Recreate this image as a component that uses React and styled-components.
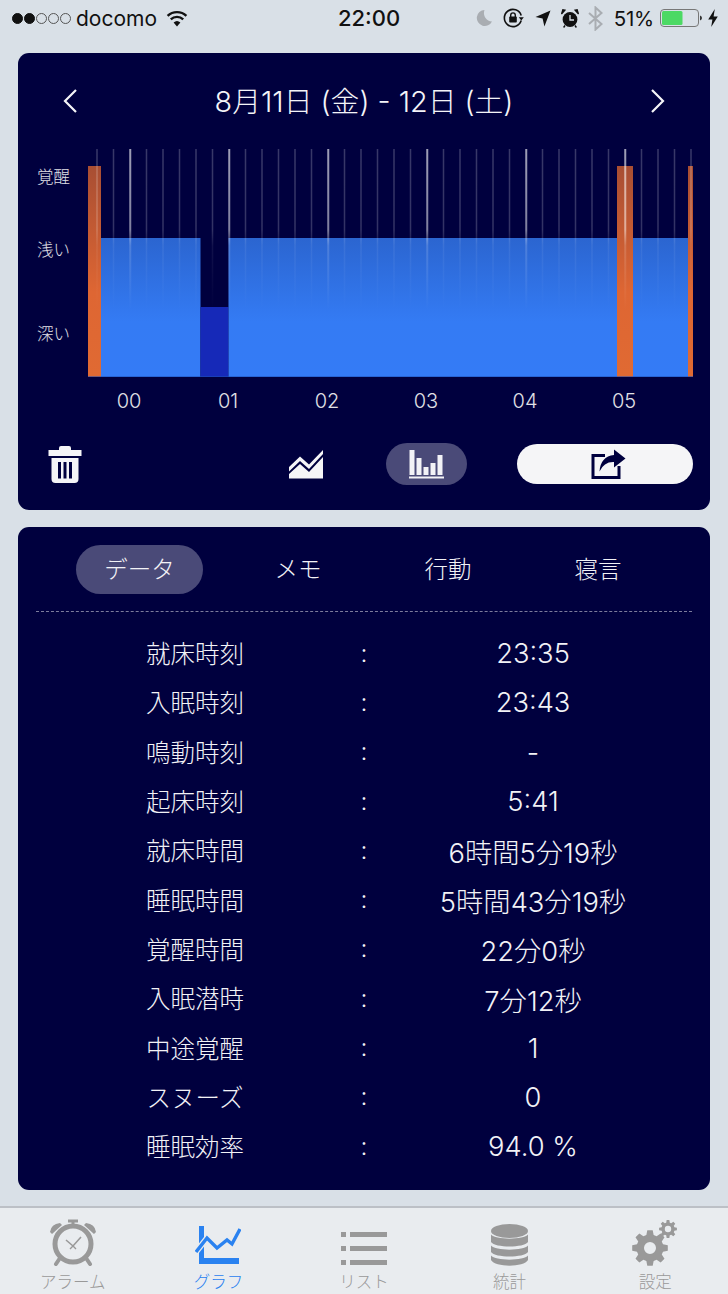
import React from "react";
import styled, { createGlobalStyle } from "styled-components";

const FONT = `Inter, "Noto Sans CJK JP", "Noto Sans", sans-serif`;

const Global = createGlobalStyle`
  html, body { margin: 0; padding: 0; width: 728px; height: 1294px; overflow: hidden; background: #d9e0e7; }
  body { font-family: ${FONT}; }
  * { box-sizing: border-box; }
`;

const Page = styled.div`
  width: 728px; height: 1294px; display: flex; flex-direction: column; background: #d9e0e7;
`;
const StatusBar = styled.div`
  height: 38px; flex: none; display: grid; grid-template-columns: 1fr auto 1fr; align-items: center;
  color: #111; font-size: 21px; padding: 0 10px 2px 12px;
`;
const StatusLeft = styled.div`display: flex; align-items: center;`;
const Carrier = styled.span`margin-left: 4px; letter-spacing: 0; font-weight: 400;`;
const Clock = styled.span`font-weight: 500; font-size: 22px; margin-left: 8px;`;
const StatusRight = styled.div`display: flex; align-items: center; justify-content: flex-end;`;
const Percent = styled.span`font-size: 20.5px; margin: 0 6px 0 11px; letter-spacing: -0.2px;`;
const Dot = styled.span`
  width: 11px; height: 11px; border-radius: 50%; margin-right: 1px; flex: none;
  background: ${p => (p.$on ? "#111" : "transparent")};
  border: 1px solid ${p => (p.$on ? "#111" : "#555")};
`;
const Ic = styled.svg`display: block; flex: none; margin-left: ${p => p.$ml || 0}px;`;

const Card = styled.section`
  margin: 15px 18px 0; background: #00003e; border-radius: 11px; color: #f2f2f6; flex: none;
`;
const GraphCard = styled(Card)`height: 457px; display: flex; flex-direction: column;`;
const DataCard = styled(Card)`margin-top: 17px; height: 663px; padding: 18px 18px 0;`;

const Header = styled.div`
  height: 87px; flex: none; display: grid; grid-template-columns: 1fr auto 1fr; align-items: center; padding: 9px 44px 0 44px;
`;
const Title = styled.h1`margin: -3px 0 0; font-size: 28.8px; font-weight: 300; color: #f4f4f8; white-space: nowrap;`;
const NavRight = styled.div`display: flex; justify-content: flex-end;`;
const ChartSvg = styled.svg`display: block; flex: none;`;
const AxisText = styled.text`font-family: ${FONT}; fill: #e0e0e6; font-size: ${p => p.$size}px; font-weight: 300;`;

const Toolbar = styled.div`
  display: grid; grid-template-columns: 241px 97px 131px 176px; align-items: center; padding: 0 0 0 30px; height: 86px;
`;
const ViewPill = styled.div`
  width: 81px; height: 42px; border-radius: 21px; background: #4a4a78; display: flex; align-items: center; justify-content: center;
`;
const SharePill = styled.div`
  width: 176px; height: 40px; border-radius: 20px; background: #f5f5f7; display: flex; align-items: center; justify-content: center; padding-left: 6px;
`;

const Tabs = styled.div`display: flex; padding-left: 40px; gap: 0; align-items: center;`;
const Tab = styled.div`
  height: 49px; flex: none; width: ${p => (p.$active ? "127px" : "150px")}; margin-right: ${p => (p.$active ? "20px" : "0")};
  border-radius: 25px; background: ${p => (p.$active ? "#4a4a78" : "transparent")};
  display: flex; align-items: center; justify-content: center; font-size: 23.5px; font-weight: 300; padding-bottom: 3px;
`;
const Divider = styled.div`margin-top: 17px; border-top: 1px dashed #7c7c9c;`;
const Rows = styled.div`padding-top: 17px;`;
const Row = styled.div`
  display: grid; grid-template-columns: 318px 20px 318px; height: 49.3px; align-items: center; text-align: center;
  font-size: 24.5px; font-weight: 300; white-space: nowrap;
`;
const Value = styled.span`font-size: 27.3px; letter-spacing: 0;`;
const LabelCell = styled.span`padding-bottom: 2px;`;

const TabBar = styled.nav`
  margin-top: 16px; flex: 1; background: #e9ecef; border-top: 2px solid #bcc0c6;
  display: grid; grid-template-columns: repeat(5, 1fr);
`;
const TabItem = styled.div`
  display: flex; flex-direction: column; align-items: center; color: ${p => (p.$active ? "#2a82f0" : "#999")};
`;
const TabIcon = styled.div`height: 65px; display: flex; align-items: flex-end; padding-bottom: 7px;`;
const TabLabel = styled.span`font-size: 16.5px; line-height: 18px; font-weight: 300;`;

const gearPath = (cx, cy, ro, ri, hole, teeth) => {
  const pts = [];
  const step = (Math.PI * 2) / teeth;
  for (let i = 0; i < teeth; i++) {
    const a = i * step - Math.PI / 2;
    const w = step * 0.24;
    [[ri, a - w * 1.45], [ro, a - w * 0.8], [ro, a + w * 0.8], [ri, a + w * 1.45]].forEach(([r, t]) =>
      pts.push(`${(cx + r * Math.cos(t)).toFixed(2)} ${(cy + r * Math.sin(t)).toFixed(2)}`)
    );
  }
  return `M${pts.join("L")}Z M${cx - hole} ${cy}a${hole} ${hole} 0 1 0 ${hole * 2} 0a${hole} ${hole} 0 1 0 ${-hole * 2} 0Z`;
};

const segs = [
  { x: 101, w: 99.5, top: 238, k: "light" },
  { x: 200.5, w: 28, top: 307, k: "deep" },
  { x: 228.5, w: 388.5, top: 238, k: "light" },
  { x: 633, w: 55, top: 238, k: "light" },
  { x: 88, w: 13, top: 166, k: "wake" },
  { x: 617, w: 16, top: 166, k: "wake" },
  { x: 688, w: 5, top: 166, k: "wake" },
];
const fills = { light: "url(#light)", deep: "#1629b8", wake: "url(#wake)" };
const ticks = Array.from({ length: 37 }, (_, i) => 97 + i * 16.5);

function Chart() {
  return (
    <ChartSvg width="692" height="281" viewBox="18 140 692 281">
      <defs>
        <linearGradient id="light" gradientUnits="userSpaceOnUse" x1="0" y1="238" x2="0" y2="377">
          <stop offset="0" stopColor="#2b65d0" />
          <stop offset="0.6" stopColor="#347bf4" />
          <stop offset="1" stopColor="#347bf6" />
        </linearGradient>
        <linearGradient id="wake" gradientUnits="userSpaceOnUse" x1="0" y1="166" x2="0" y2="377">
          <stop offset="0" stopColor="#a84e33" />
          <stop offset="0.6" stopColor="#de6633" />
          <stop offset="1" stopColor="#e06a33" />
        </linearGradient>
        <linearGradient id="tickMinor" gradientUnits="userSpaceOnUse" x1="0" y1="149" x2="0" y2="310">
          <stop offset="0" stopColor="#fff" stopOpacity="0.22" />
          <stop offset="0.5" stopColor="#fff" stopOpacity="0.2" />
          <stop offset="0.6" stopColor="#fff" stopOpacity="0.07" />
          <stop offset="1" stopColor="#fff" stopOpacity="0" />
        </linearGradient>
        <linearGradient id="tickMajor" gradientUnits="userSpaceOnUse" x1="0" y1="149" x2="0" y2="310">
          <stop offset="0" stopColor="#fff" stopOpacity="0.62" />
          <stop offset="0.5" stopColor="#fff" stopOpacity="0.5" />
          <stop offset="0.6" stopColor="#fff" stopOpacity="0.16" />
          <stop offset="1" stopColor="#fff" stopOpacity="0" />
        </linearGradient>
      </defs>
      {segs.map(s => (
        <rect key={s.x} x={s.x} y={s.top} width={s.w} height={377 - s.top} fill={fills[s.k]} />
      ))}
      <rect x="88" y="376" width="605" height="1" fill="#1d52b8" opacity="0.55" />
      {ticks.map((x, i) => (
        <rect
          key={x}
          x={x - 0.75}
          y="149"
          width={i % 6 === 2 ? 2 : 1.5}
          height="161"
          fill={i % 6 === 2 ? "url(#tickMajor)" : "url(#tickMinor)"}
        />
      ))}
      <AxisText $size="16.5" x="37" y="183">覚醒</AxisText>
      <AxisText $size="16.5" x="37" y="256">浅い</AxisText>
      <AxisText $size="16.5" x="37" y="340">深い</AxisText>
      {["00", "01", "02", "03", "04", "05"].map((t, i) => (
        <AxisText key={t} $size="20" x={129 + i * 99} y="408" textAnchor="middle">{t}</AxisText>
      ))}
    </ChartSvg>
  );
}

const rows = [
  ["就床時刻", "23:35"], ["入眠時刻", "23:43"], ["鳴動時刻", "-"], ["起床時刻", "5:41"],
  ["就床時間", "6時間5分19秒"], ["睡眠時間", "5時間43分19秒"], ["覚醒時間", "22分0秒"],
  ["入眠潜時", "7分12秒"], ["中途覚醒", "1"], ["スヌーズ", "0"], ["睡眠効率", "94.0 %"],
];

export default function App() {
  return (
    <Page>
      <Global />
      <StatusBar>
        <StatusLeft>
          <Dot $on /><Dot $on /><Dot /><Dot /><Dot />
          <Carrier>docomo</Carrier>
          <Ic $ml="9" width="22" height="17" viewBox="0 0 22 17">
            <path d="M11 16.5 L7.6 12.6 A5 5 0 0 1 14.4 12.6Z" fill="#111" />
            <path d="M4.8 9.4 A9 9 0 0 1 17.2 9.4 M1.6 5.9 A13.6 13.6 0 0 1 20.4 5.9" fill="none" stroke="#111" strokeWidth="2.4" />
          </Ic>
        </StatusLeft>
        <Clock>22:00</Clock>
        <StatusRight>
          <Ic width="18" height="18" viewBox="0 0 18 18">
            <path d="M9.5 1 A8 8 0 1 0 17 12.5 A8.5 8.5 0 0 1 9.5 1Z" fill="#a9adb2" />
          </Ic>
          <Ic $ml="10" width="21" height="20" viewBox="0 0 21 20">
            <path d="M18.2 12.5 A8.6 8.6 0 1 1 18.2 7.5" fill="none" stroke="#111" strokeWidth="1.6" />
            <path d="M15.8 9.2 h5 l-2.5 3.4Z" fill="#111" />
            <rect x="6.2" y="8.6" width="7.6" height="6" rx="0.8" fill="#111" />
            <path d="M7.7 9 V7.2 a2.3 2.3 0 0 1 4.6 0 V9" fill="none" stroke="#111" strokeWidth="1.4" />
          </Ic>
          <Ic $ml="11" width="16" height="17" viewBox="0 0 16 17">
            <path d="M15.5 0.5 L9.4 16.5 L7.6 8.6 L0.5 7Z" fill="#111" />
          </Ic>
          <Ic $ml="10" width="18" height="19" viewBox="0 0 18 19">
            <circle cx="9" cy="10.5" r="7.4" fill="#111" />
            <path d="M9 6 V11 H13" fill="none" stroke="#d9e0e7" strokeWidth="1.3" />
            <path d="M0.5 5 L4 1.2 L1.8 0.8Z M17.5 5 L14 1.2 L16.2 0.8Z" fill="#111" stroke="#111" strokeWidth="1.2" />
            <path d="M4 16.5 L2.6 18.5 M14 16.5 L15.4 18.5" stroke="#111" strokeWidth="1.4" />
          </Ic>
          <Ic $ml="9" width="15" height="25" viewBox="0 0 15 25">
            <path d="M1 7 L13.5 18 L7.5 23.5 V1.5 L13.5 7 L1 18" fill="none" stroke="#a9adb2" strokeWidth="2" />
          </Ic>
          <Percent>51%</Percent>
          <Ic width="42" height="18" viewBox="0 0 42 18">
            <rect x="0.5" y="0.5" width="38" height="17" rx="3.5" fill="none" stroke="#777" />
            <rect x="2" y="2" width="20.5" height="14" rx="1.5" fill="#4cd964" />
            <path d="M40 6.5 q2 .6 2 2.5 t-2 2.5Z" fill="#333" />
          </Ic>
          <Ic $ml="6" width="10" height="18" viewBox="0 0 10 18">
            <path d="M6.8 0 L0.2 10.4 H4.4 L3.2 18 L9.8 7.4 H5.6Z" fill="#111" />
          </Ic>
        </StatusRight>
      </StatusBar>

      <GraphCard>
        <Header>
          <Ic width="16" height="26" viewBox="0 0 16 26">
            <path d="M14 2 L3 13 L14 24" fill="none" stroke="#f4f4f8" strokeWidth="2.2" />
          </Ic>
          <Title>8月11日 (金) - 12日 (土)</Title>
          <NavRight>
            <Ic width="16" height="26" viewBox="0 0 16 26">
              <path d="M2 2 L13 13 L2 24" fill="none" stroke="#f4f4f8" strokeWidth="2.2" />
            </Ic>
          </NavRight>
        </Header>
        <Chart />
        <Toolbar>
          <Ic width="34" height="38" viewBox="0 0 34 38">
            <path d="M11 3 Q11 1 13 1 H21 Q23 1 23 3 V5 H33.5 V11 H0.5 V5 H11Z" fill="#f5f5f7" />
            <path d="M3.5 13 H30.5 V34 Q30.5 38 26.5 38 H7.5 Q3.5 38 3.5 34Z M10 17 V33.5 H13 V17Z M15.5 17 V33.5 H18.5 V17Z M21 17 V33.5 H24 V17Z" fill="#f5f5f7" fillRule="evenodd" />
          </Ic>
          <Ic width="34" height="30" viewBox="0 0 34 30">
            <path d="M0 18 L11 7.5 L20 15.5 L34 1 V5 L20 20 L11 12 L0 22.5Z" fill="#f5f5f7" />
            <path d="M0 25 L11 15 L20 23 L34 8 V29.5 H0Z" fill="#f5f5f7" />
          </Ic>
          <ViewPill>
            <Ic width="35" height="29" viewBox="0 0 35 29">
              <g fill="#f2f2f6">
                <rect x="0.5" y="0" width="5" height="25" />
                <rect x="7.5" y="8" width="5" height="17" />
                <rect x="14.5" y="17" width="5" height="8" />
                <rect x="21.5" y="13" width="5" height="12" />
                <rect x="28.5" y="5" width="5" height="20" />
                <rect x="0" y="26.5" width="35" height="2" />
              </g>
            </Ic>
          </ViewPill>
          <SharePill>
            <Ic width="35" height="30" viewBox="0 0 35 30">
              <path d="M14 6.5 H2 V28.5 H28 V17" fill="none" stroke="#00003e" strokeWidth="3" />
              <path d="M23 0.5 L34.5 9.5 L23 18.5 V13 Q13 12.5 8.5 22.5 Q9.5 7.5 23 6Z" fill="#00003e" />
            </Ic>
          </SharePill>
        </Toolbar>
      </GraphCard>

      <DataCard>
        <Tabs>
          <Tab $active>データ</Tab>
          <Tab>メモ</Tab>
          <Tab>行動</Tab>
          <Tab>寝言</Tab>
        </Tabs>
        <Divider />
        <Rows>
          {rows.map(([l, v]) => (
            <Row key={l}>
              <LabelCell>{l}</LabelCell>
              <LabelCell>:</LabelCell>
              <Value>{v}</Value>
            </Row>
          ))}
        </Rows>
      </DataCard>

      <TabBar>
        <TabItem>
          <TabIcon>
            <Ic width="48" height="47" viewBox="0 0 48 47">
              <circle cx="24" cy="25" r="18" fill="none" stroke="#999" strokeWidth="5" />
              <path d="M17 21 L24 27 L32 18" fill="none" stroke="#999" strokeWidth="1.6" />
              <path d="M24 27 L21 30 M24 27 L27 30" stroke="#999" strokeWidth="1.4" />
              <path d="M1 13 Q2 5 11 4 L13 6 L3 15Z M47 13 Q46 5 37 4 L35 6 L45 15Z" fill="#999" />
              <path d="M19 2 H29 M24 2 V7" stroke="#999" strokeWidth="3" />
              <path d="M11 39 L7 45 M37 39 L41 45" stroke="#999" strokeWidth="4" strokeLinecap="round" />
            </Ic>
          </TabIcon>
          <TabLabel>アラーム</TabLabel>
        </TabItem>
        <TabItem $active>
          <TabIcon>
            <Ic width="46" height="40" viewBox="0 0 46 40">
              <path d="M4 0 H9 V32 H44 V38 H4Z" fill="#2a82f0" />
              <path d="M1 26 L12 12 L22 22 L32 14 L37 18 L45 3" fill="none" stroke="#e9ecef" strokeWidth="6" />
              <path d="M1 26 L12 12 L22 22 L32 14 L37 18 L45 3" fill="none" stroke="#2a82f0" strokeWidth="3.4" />
            </Ic>
          </TabIcon>
          <TabLabel>グラフ</TabLabel>
        </TabItem>
        <TabItem>
          <TabIcon>
            <Ic width="46" height="34" viewBox="0 0 46 34">
              <path d="M0 0 H5 V5 H0Z M0 14 H5 V19 H0Z M0 28 H5 V33 H0Z M9 0 H46 V5 H9Z M9 14 H46 V19 H9Z M9 28 H46 V33 H9Z" fill="#999" />
            </Ic>
          </TabIcon>
          <TabLabel>リスト</TabLabel>
        </TabItem>
        <TabItem>
          <TabIcon>
            <Ic width="37" height="42" viewBox="0 0 37 42">
              <g fill="#999">
                <ellipse cx="18.5" cy="7" rx="18.5" ry="7" />
                <path d="M0 10.5 C4 16 33 16 37 10.5 V18 C33 24 4 24 0 18Z" />
                <path d="M0 21.5 C4 27 33 27 37 21.5 V28 C33 34 4 34 0 28Z" />
                <path d="M0 31.5 C4 37 33 37 37 31.5 V36 C33 43.5 4 43.5 0 36Z" />
              </g>
            </Ic>
          </TabIcon>
          <TabLabel>統計</TabLabel>
        </TabItem>
        <TabItem>
          <TabIcon>
            <Ic width="46" height="46" viewBox="0 0 46 46">
              <path d={gearPath(18, 28, 18, 13.5, 6, 8)} fill="#999" fillRule="evenodd" />
              <path d={gearPath(36, 9, 9, 6.6, 3.2, 8)} fill="#999" fillRule="evenodd" />
            </Ic>
          </TabIcon>
          <TabLabel>設定</TabLabel>
        </TabItem>
      </TabBar>
    </Page>
  );
}
